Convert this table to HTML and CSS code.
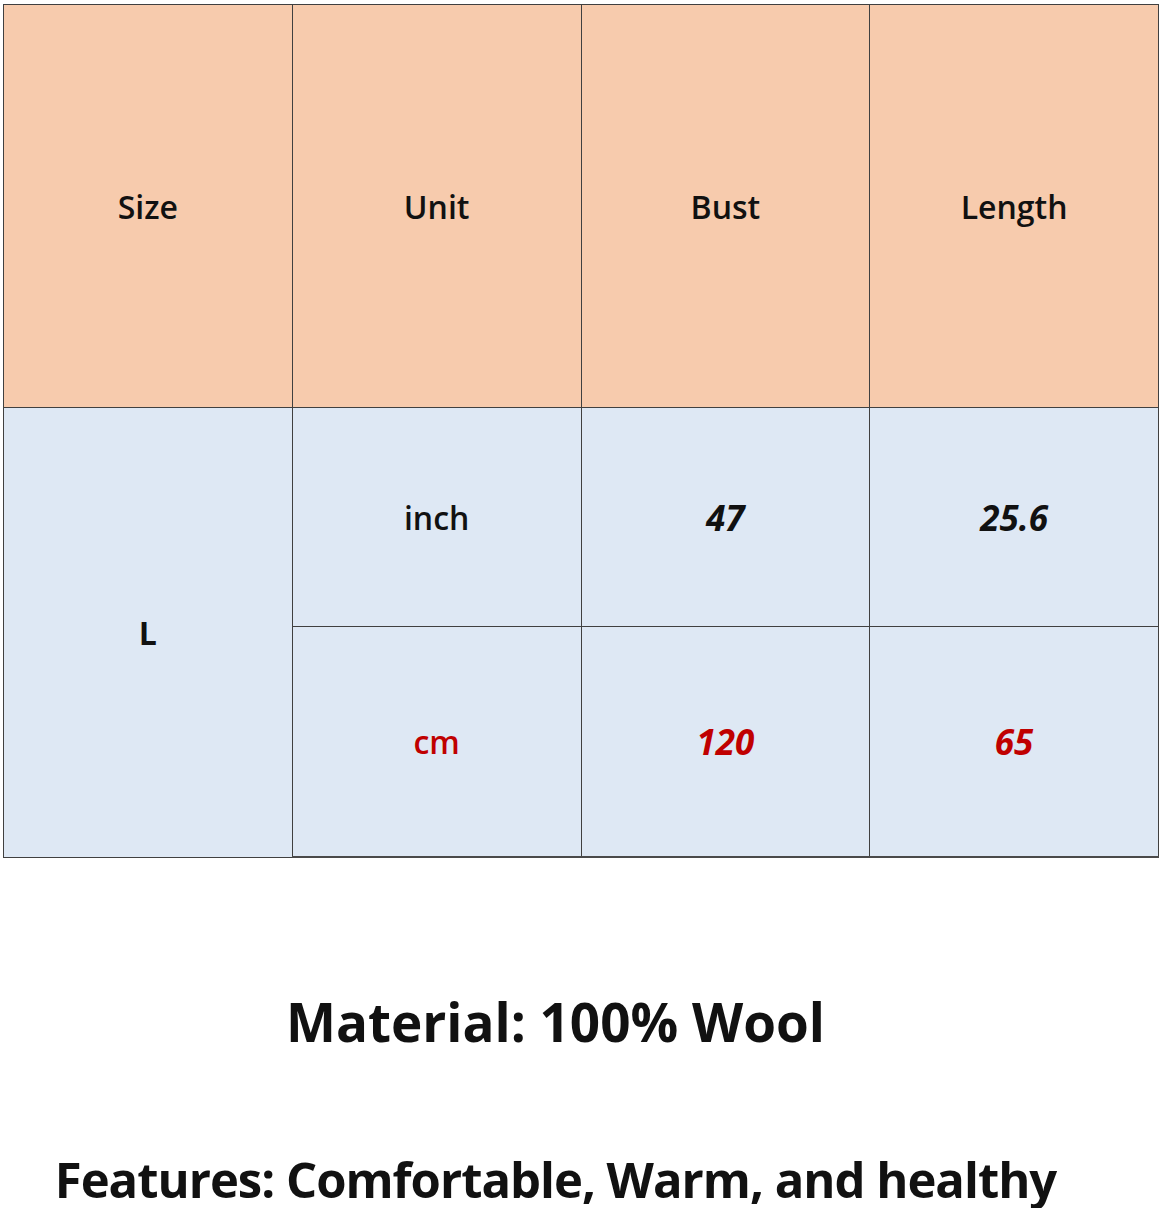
FILE: index.html
```html
<!DOCTYPE html>
<html>
<head>
<meta charset="utf-8">
<link rel="stylesheet" href="styles.css">
</head>
<body>
<div class="page">
  <table class="size-table">
    <tr class="head">
      <th>Size</th>
      <th>Unit</th>
      <th>Bust</th>
      <th>Length</th>
    </tr>
    <tr class="row-inch">
      <td rowspan="2" class="size">L</td>
      <td class="unit">inch</td>
      <td class="num">47</td>
      <td class="num">25.6</td>
    </tr>
    <tr class="row-cm">
      <td class="unit red">cm</td>
      <td class="num red">120</td>
      <td class="num red">65</td>
    </tr>
  </table>
  <div class="info">
    <p class="line material">Material: 100% Wool</p>
    <p class="line features">Features: Comfortable, Warm, and healthy</p>
  </div>
</div>
</body>
</html>
```
FILE: styles.css
```css
html, body {
  margin: 0;
  padding: 0;
  background: #ffffff;
}
body {
  font-family: "Open Sans", "Liberation Sans", sans-serif;
  color: #111111;
}
.page {
  width: 1161px;
}
.size-table {
  border-collapse: collapse;
  margin: 4px 0 0 3px;
  width: 1156px;
  table-layout: fixed;
}
.size-table th,
.size-table td {
  border: 1px solid #404040;
  text-align: center;
  vertical-align: middle;
  padding: 0;
  font-size: 32px;
  font-weight: 600;
}
.head th {
  background: #f7cbad;
  height: 402px;
}
.row-inch td,
.row-cm td {
  background: #dee8f4;
}
.row-inch td {
  height: 218px;
}
.row-cm td {
  height: 229px;
}
.size-table td.size {
  font-weight: 700;
}
.size-table td.num {
  font-style: italic;
  font-weight: 700;
  font-size: 35px;
}
.red {
  color: #c00000;
}
.size-table tr:last-child td {
  border-bottom: 2px solid #4a4a4a;
}
.info {
  width: 1111px;
  display: flex;
  flex-direction: column;
  align-items: center;
}
.line {
  margin: 0;
  font-weight: 700;
  white-space: nowrap;
}
.info .material {
  margin-top: 124px;
  font-size: 53px;
  line-height: 80px;
}
.info .features {
  margin-top: 88px;
  font-size: 49px;
  line-height: 58px;
  letter-spacing: -1px;
}
```
